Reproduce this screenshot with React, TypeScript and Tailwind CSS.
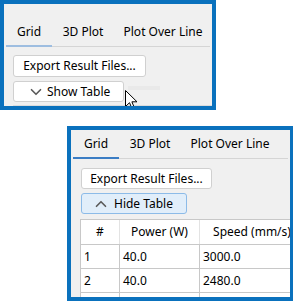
import { ChevronDown, ChevronUp } from "lucide-react";

const font = { fontFamily: '"Noto Sans", "Segoe UI", sans-serif' };

function Tabs({ dim }: { dim?: boolean }) {
    const tabs = [
        { t: "Grid", w: "w-[46px]" },
        { t: "3D Plot", w: "w-[62px]" },
        { t: "Plot Over Line", w: "w-[98px]" },
    ];
    return (
        <div className="flex h-full items-end border-b border-[#d5d5d5] mx-[2px]">
            {tabs.map((tab, i) => (
                <div
                    key={tab.t}
                    className={
                        i === 0
                            ? dim
                                ? `${tab.w} shrink-0 flex justify-center whitespace-nowrap pb-[5px] -mb-px border-b-2 border-[#9dbde0] text-[12px] leading-4 text-black`
                                : `${tab.w} shrink-0 flex justify-center whitespace-nowrap pb-[5px] -mb-px border-b-2 border-[#3b7dc4] text-[12px] leading-4 text-black`
                            : `${tab.w} shrink-0 flex justify-center whitespace-nowrap pb-[6px] text-[12px] leading-4 text-black`
                    }
                >
                    {tab.t}
                </div>
            ))}
        </div>
    );
}

function Cursor() {
    return (
        <svg className="absolute left-[121px] top-[86px]" width="13" height="21" viewBox="0 0 13 21">
            <path d="M0.5 0.5 L0.5 16.5 L4.5 12.7 L7.3 19.3 L9.6 18.3 L6.9 11.8 L12 11.8 Z" fill="white" stroke="black" strokeWidth="1" strokeLinejoin="round" />
        </svg>
    );
}

export default function App() {
    const rows = [
        ["1", "40.0", "3000.0"],
        ["2", "40.0", "2480.0"],
        ["", "", ""],
    ];
    return (
        <div className="w-[293px] h-[301px] bg-white flex flex-col overflow-hidden" style={font}>
            {/* collapsed state */}
            <div className="relative w-[216px] h-[110px] border-4 border-[#0a71bd] bg-[#f0f0f0] flex flex-col overflow-hidden">
                <div className="h-[43px] shrink-0">
                    <Tabs dim />
                </div>
                <div className="flex flex-col items-start pl-[9px]">
                    <button className="mt-[8px] w-[133px] h-[22px] bg-white border border-[#d0d0d0] rounded-[3px] text-[12px] text-black leading-4 whitespace-nowrap">
                        Export Result Files...
                    </button>
                    <button className="mt-[4px] w-[111px] h-[21px] bg-white border border-[#d0d0d0] rounded-[3px] flex items-center gap-[2px] pl-[13px] text-[12px] text-black leading-4 whitespace-nowrap">
                        <ChevronDown size={18} strokeWidth={2.2} className="text-[#5a5a5a]" />
                        Show Table
                    </button>
                </div>
                <div className="ml-[9px] mt-[3px] border-t border-[#dcdcdc]" />
                <div className="absolute left-[124px] top-[82px] w-[32px] h-[4px] bg-[#e9e9e9]" />
                <Cursor />
            </div>

            {/* expanded state */}
            <div className="ml-[67px] mt-[16px] w-[226px] h-[175px] border-4 border-r-[3px] border-[#0a71bd] bg-[#f0f0f0] flex flex-col overflow-hidden">
                <div className="h-[29px] shrink-0">
                    <Tabs />
                </div>
                <div className="flex flex-col items-start pl-[10px] shrink-0">
                    <button className="mt-[9px] w-[131px] h-[21px] bg-white border border-[#d0d0d0] rounded-[3px] text-[12px] text-black leading-4 whitespace-nowrap">
                        Export Result Files...
                    </button>
                    <button className="mt-[4px] w-[106px] h-[21px] bg-[#e1eefa] border border-[#8cbbe8] rounded-[3px] flex items-center gap-[4px] pl-[10px] text-[12px] text-black leading-4 whitespace-nowrap">
                        <ChevronUp size={18} strokeWidth={2.2} className="text-[#5a5a5a]" />
                        Hide Table
                    </button>
                </div>
                <div className="mt-[5px] ml-[9px] bg-white border-l border-t border-[#c8c8c8] shrink-0">
                    <div className="grid grid-cols-[39px_80px_104px] h-[25px] border-b border-[#c8c8c8]">
                        <div className="flex items-center justify-center border-r border-[#e3e3e3] text-[12px] text-black">#</div>
                        <div className="flex items-center justify-center border-r border-[#e3e3e3] text-[12px] text-black whitespace-nowrap">Power (W)</div>
                        <div className="flex items-center justify-center text-[12px] text-black whitespace-nowrap">Speed (mm/s)</div>
                    </div>
                    {rows.map((r, i) => (
                        <div key={i} className="grid grid-cols-[39px_80px_104px] h-[24px] border-b border-[#c8c8c8]">
                            {r.map((c, j) => (
                                <div key={j} className={j < 2 ? "flex items-center pl-[3px] border-r border-[#c8c8c8] text-[12px] text-black" : "flex items-center pl-[3px] text-[12px] text-black"}>
                                    {c}
                                </div>
                            ))}
                        </div>
                    ))}
                </div>
            </div>
        </div>
    );
}
